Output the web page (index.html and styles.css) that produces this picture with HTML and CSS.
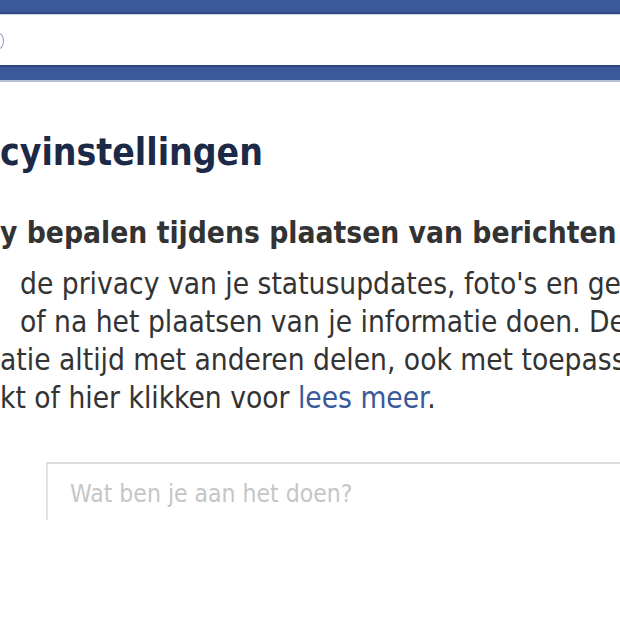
FILE: index.html
```html
<!DOCTYPE html>
<html lang="nl">
<head>
<meta charset="utf-8">
<title>Privacyinstellingen</title>
<link rel="stylesheet" href="styles.css">
</head>
<body>
<header class="topbar">
  <div class="topbar-strip"></div>
  <div class="topbar-band"><span class="search-edge"></span></div>
  <div class="topbar-nav"></div>
</header>
<main class="content">
  <h1 class="title">cyinstellingen</h1>
  <h2 class="subtitle">y bepalen tijdens plaatsen van berichten</h2>
  <div class="text">
    <p class="line indent">de privacy van je statusupdates, foto's en geg</p>
    <p class="line indent">of na het plaatsen van je informatie doen. De</p>
    <p class="line">atie altijd met anderen delen, ook met toepassi</p>
    <p class="line">kt of hier klikken voor <a class="link" href="#">lees meer</a>.</p>
  </div>
  <div class="composer">
    <div class="composer-box">Wat ben je aan het doen?</div>
  </div>
</main>
</body>
</html>
```
FILE: styles.css
```css
html, body {
  margin: 0;
  padding: 0;
  background: #fff;
  overflow: hidden;
  width: 620px;
  height: 620px;
}
body {
  font-family: "DejaVu Sans Condensed", "DejaVu Sans", sans-serif;
  color: #333;
}
.topbar-strip {
  height: 12px;
  background: #3b5998;
  border-bottom: 2px solid #2f4a86;
}
.topbar-band {
  height: 50px;
  background: #fff;
  border-top: 1px solid #c9d2e4;
  position: relative;
}
.search-edge {
  position: absolute;
  left: -6px;
  top: 18px;
  width: 8px;
  height: 14px;
  border-radius: 50%;
  border: 1px solid #8a9bc4;
}
.topbar-nav {
  height: 13px;
  background: #3b5998;
  border-top: 2px solid #2d4583;
  border-bottom: 2px solid #b7c1d8;
}
.content {
  padding-top: 46px;
}
.title {
  margin: 0;
  font-size: 37px;
  line-height: 50px;
  font-weight: bold;
  color: #1c2a47;
  white-space: nowrap;
}
.subtitle {
  margin: 37px 0 0;
  font-size: 29.7px;
  line-height: 36px;
  font-weight: bold;
  color: #333;
  white-space: nowrap;
}
.text {
  margin-top: 14px;
  font-size: 29.6px;
}
.line {
  margin: 0;
  line-height: 38px;
  white-space: nowrap;
}
.indent {
  padding-left: 20px;
}
.link {
  color: #3b5998;
  text-decoration: none;
}
.composer {
  margin-top: 45px;
  padding-left: 46px;
}
.composer-box {
  border-top: 2px solid #dcdcdc;
  border-left: 2px solid #e2e2e2;
  height: 58px;
  padding: 15px 0 0 22px;
  box-sizing: border-box;
  font-size: 24.5px;
  color: #c6c6c6;
  white-space: nowrap;
}
```
